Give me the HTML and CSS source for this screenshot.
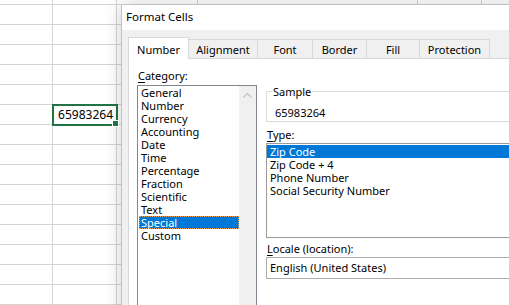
FILE: index.html
```
<!DOCTYPE html>
<html>
<head>
<meta charset="utf-8">
<link rel="stylesheet" href="styles.css">
</head>
<body>
<div class="sheet">
  <div class="grid">
    <div class="row"><div class="c c1"></div><div class="c c2"></div><div class="c c3"></div><div class="c c4"></div><div class="c c5"></div><div class="c c6"></div></div>
    <div class="row"><div class="c c1"></div><div class="c c2"></div><div class="c c3"></div><div class="c c4"></div><div class="c c5"></div><div class="c c6"></div></div>
    <div class="row"><div class="c c1"></div><div class="c c2"></div><div class="c c3"></div><div class="c c4"></div><div class="c c5"></div><div class="c c6"></div></div>
    <div class="row"><div class="c c1"></div><div class="c c2"></div><div class="c c3"></div><div class="c c4"></div><div class="c c5"></div><div class="c c6"></div></div>
    <div class="row"><div class="c c1"></div><div class="c c2"></div><div class="c c3"></div><div class="c c4"></div><div class="c c5"></div><div class="c c6"></div></div>
    <div class="row"><div class="c c1"></div><div class="c c2"></div><div class="c c3"></div><div class="c c4"></div><div class="c c5"></div><div class="c c6"></div></div>
    <div class="row"><div class="c c1"></div><div class="c c2 sel">65983264<span class="handle"></span></div><div class="c c3"></div><div class="c c4"></div><div class="c c5"></div><div class="c c6"></div></div>
    <div class="row"><div class="c c1"></div><div class="c c2"></div><div class="c c3"></div><div class="c c4"></div><div class="c c5"></div><div class="c c6"></div></div>
    <div class="row"><div class="c c1"></div><div class="c c2"></div><div class="c c3"></div><div class="c c4"></div><div class="c c5"></div><div class="c c6"></div></div>
    <div class="row"><div class="c c1"></div><div class="c c2"></div><div class="c c3"></div><div class="c c4"></div><div class="c c5"></div><div class="c c6"></div></div>
    <div class="row"><div class="c c1"></div><div class="c c2"></div><div class="c c3"></div><div class="c c4"></div><div class="c c5"></div><div class="c c6"></div></div>
    <div class="row"><div class="c c1"></div><div class="c c2"></div><div class="c c3"></div><div class="c c4"></div><div class="c c5"></div><div class="c c6"></div></div>
    <div class="row"><div class="c c1"></div><div class="c c2"></div><div class="c c3"></div><div class="c c4"></div><div class="c c5"></div><div class="c c6"></div></div>
    <div class="row"><div class="c c1"></div><div class="c c2"></div><div class="c c3"></div><div class="c c4"></div><div class="c c5"></div><div class="c c6"></div></div>
    <div class="row"><div class="c c1"></div><div class="c c2"></div><div class="c c3"></div><div class="c c4"></div><div class="c c5"></div><div class="c c6"></div></div>
    <div class="row"><div class="c c1"></div><div class="c c2"></div><div class="c c3"></div><div class="c c4"></div><div class="c c5"></div><div class="c c6"></div></div>
  </div>
  <div class="sheet-foot"></div>
</div>

<div class="dialog">
  <div class="titlebar">Format Cells</div>
  <div class="dbody">
    <div class="tabs">
      <div class="tab active t-number">Number</div>
      <div class="tab t-align">Alignment</div>
      <div class="tab t-font">Font</div>
      <div class="tab t-border">Border</div>
      <div class="tab t-fill">Fill</div>
      <div class="tab t-prot">Protection</div>
    </div>
    <div class="panel">
      <div class="col-left">
        <div class="label"><u>C</u>ategory:</div>
        <div class="listbox cat">
          <ul class="items">
            <li>General</li>
            <li>Number</li>
            <li>Currency</li>
            <li>Accounting</li>
            <li>Date</li>
            <li>Time</li>
            <li>Percentage</li>
            <li>Fraction</li>
            <li>Scientific</li>
            <li>Text</li>
            <li class="hl focus">Special</li>
            <li>Custom</li>
          </ul>
          <div class="vscroll">
            <svg class="up" width="9" height="6" viewBox="0 0 9 6"><path d="M0.5 5.5 L4.5 1.5 L8.5 5.5" fill="none" stroke="#c2c2c2" stroke-width="1.2"/></svg>
          </div>
        </div>
      </div>
      <div class="col-right">
        <fieldset class="sample">
          <legend>Sample</legend>
          <div class="sample-val">65983264</div>
        </fieldset>
        <div class="label lbl-type"><u>T</u>ype:</div>
        <div class="listbox type">
          <ul class="items">
            <li class="hl">Zip Code</li>
            <li>Zip Code + 4</li>
            <li>Phone Number</li>
            <li>Social Security Number</li>
          </ul>
        </div>
        <div class="label lbl-locale"><u>L</u>ocale (location):</div>
        <div class="combo">English (United States)</div>
      </div>
    </div>
  </div>
</div>
</body>
</html>
```

FILE: styles.css
```
html, body {
  margin: 0;
  padding: 0;
}
body {
  width: 509px;
  height: 305px;
  overflow: hidden;
  position: relative;
  background: #ffffff;
  font-family: "Noto Sans", "DejaVu Sans", sans-serif;
}

/* spreadsheet underlay */
.sheet {
  display: flex;
  flex-direction: column;
  height: 305px;
}
.grid {
  margin-top: -15px;
  display: flex;
  flex-direction: column;
}
.row {
  display: flex;
  height: 20px;
}
.c {
  box-sizing: border-box;
  border-right: 1px solid #d4d4d4;
  border-bottom: 1px solid #d4d4d4;
  height: 20px;
}
.c1 { width: 53px; }
.c2 { width: 64px; }
.c3 { width: 81px; }
.c4 { width: 220px; }
.c5 { width: 64px; }
.c6 { flex: 1; border-right: none; }
.sel {
  position: relative;
  font-family: "Noto Sans", sans-serif;
  font-size: 12px;
  line-height: 20px;
  text-align: right;
  padding-right: 3px;
  color: #000;
}
.sel::after {
  content: "";
  position: absolute;
  left: -1px;
  top: -1px;
  right: -2px;
  bottom: -2px;
  border: 2px solid #217346;
}
.handle {
  position: absolute;
  right: -3px;
  bottom: -3px;
  width: 5px;
  height: 5px;
  background: #217346;
  border: 1px solid #fff;
  z-index: 2;
}
.sheet-foot {
  flex: 1;
  border-top: 1px solid #ababab;
  background: #e8e8e8;
}

/* dialog */
.dialog {
  position: absolute;
  left: 121px;
  top: 5px;
  width: 440px;
  height: 330px;
  border-left: 1px solid #c4c4c4;
  box-shadow: 0 0 16px rgba(0, 0, 0, 0.2);
  background: #f0f0f0;
  display: flex;
  flex-direction: column;
  font-size: 11px;
  color: #000;
}
.titlebar {
  height: 25px;
  background: #ffffff;
  padding-left: 4px;
  line-height: 24px;
  font-size: 11.5px;
}
.dbody {
  flex: 1;
  padding: 7px 0 0 6px;
  display: flex;
  flex-direction: column;
}
.tabs {
  display: flex;
  align-items: flex-end;
  height: 21px;
  position: relative;
  z-index: 1;
}
.tab {
  box-sizing: border-box;
  height: 19px;
  border: 1px solid #d9d9d9;
  border-bottom: none;
  background: #f0f0f0;
  margin-left: -1px;
  display: flex;
  justify-content: center;
  padding-top: 3px;
  line-height: 14px;
}
.tab.active {
  height: 22px;
  margin-bottom: -1px;
  background: #ffffff;
  margin-left: 0;
  padding-top: 5px;
}
.t-number { width: 61px; }
.t-align { width: 70px; }
.t-font { width: 56px; }
.t-border { width: 55px; }
.t-fill { width: 54px; }
.t-prot { width: 71px; }

.panel {
  flex: 1;
  background: #ffffff;
  border: 1px solid #d9d9d9;
  padding: 9px 0 0 8px;
  display: flex;
  gap: 9px;
}
.label {
  height: 15px;
  line-height: 15px;
  padding-left: 1px;
}
.label u {
  text-underline-offset: 2px;
}
.col-left {
  display: flex;
  flex-direction: column;
  width: 122px;
}
.listbox {
  box-sizing: border-box;
  border: 1px solid #828790;
  background: #fff;
}
.cat {
  margin-top: 2px;
  height: 240px;
  display: flex;
}
.items {
  list-style: none;
  margin: 0;
  padding: 0;
  flex: 1;
}
.items li {
  height: 13px;
  line-height: 13px;
  padding-left: 2px;
  white-space: nowrap;
}
.cat .items {
  margin-left: 1px;
}
.items li.hl {
  background: #0078d7;
  color: #ffffff;
}
.items li.focus {
  box-sizing: border-box;
  border: 1px dotted #f0a050;
  line-height: 11px;
  padding-left: 1px;
}
.vscroll {
  width: 17px;
  background: #f0f0f0;
  display: flex;
  justify-content: center;
  align-items: flex-start;
  padding-top: 6px;
  box-sizing: border-box;
}

.col-right {
  display: flex;
  flex-direction: column;
  width: 300px;
  margin-top: 17px;
}
.sample {
  margin: 0;
  padding: 0 0 1px 5px;
  border: 1px solid #dcdcdc;
  height: 37px;
  box-sizing: border-box;
}
.sample legend {
  padding: 0 1px;
  line-height: 13px;
}
.sample-val {
  padding-top: 8px;
  padding-left: 3px;
  line-height: 13px;
}
.lbl-type {
  margin-top: 5px;
}
.type {
  margin-top: 1px;
  height: 95px;
  padding-top: 1px;
  border-color: #9a9a9a;
}
.type .items {
  margin: 0;
}
.type .items li {
  padding-left: 3px;
}
.lbl-locale {
  margin-top: 3px;
}
.combo {
  margin-top: 1px;
  box-sizing: border-box;
  height: 22px;
  border: 1px solid #adadad;
  line-height: 20px;
  padding-left: 3px;
  background: #fff;
}
```
